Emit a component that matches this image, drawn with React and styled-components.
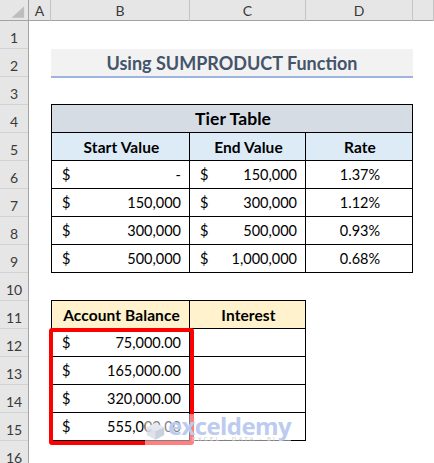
import styled, { createGlobalStyle } from 'styled-components';

const GlobalStyle = createGlobalStyle`
  html, body {
    margin: 0;
    padding: 0;
    background: #ffffff;
    overflow: hidden;
  }
  * {
    box-sizing: border-box;
  }
`;

const COLS = '29px 22px 139px 116px 107px 1fr';

const Sheet = styled.div`
  position: relative;
  width: 434px;
  height: 463px;
  overflow: hidden;
  font-family: Lato, "Liberation Sans", sans-serif;
  background: #ffffff;
`;

const ColHeaderBar = styled.div`
  display: grid;
  grid-template-columns: ${COLS};
  height: 21px;
  background: #e6e6e6;
  border-bottom: 1px solid #a3a3a3;
`;

const ColHeader = styled.div`
  display: flex;
  align-items: center;
  justify-content: center;
  border-right: 1px solid ${(p) => (p.$corner ? '#a3a3a3' : '#c4c4c4')};
  color: #3a3a3a;
  font-size: 14px;
`;

const Body = styled.div`
  display: flex;
`;

const RowHeaders = styled.div`
  display: flex;
  flex-direction: column;
  width: 29px;
  background: #e6e6e6;
  border-right: 1px solid #a3a3a3;
`;

const RowNum = styled.div`
  height: 28px;
  flex: none;
  display: flex;
  align-items: center;
  justify-content: center;
  padding-top: 5px;
  border-bottom: 1px solid #d2d2d2;
  color: #3a3a3a;
  font-size: 14px;
`;

const Content = styled.div`
  flex: 1;
  display: grid;
  grid-template-columns: 22px 139px 116px 107px 1fr;
  grid-template-rows: repeat(16, 28px);
`;

const Title = styled.div`
  grid-column: 2 / 5;
  grid-row: 2;
  display: flex;
  align-items: center;
  justify-content: center;
  height: 29px;
  background: #f2f2f2;
  border-bottom: 2px solid #9db4df;
  color: #44546a;
  font-size: 18px;
  font-weight: 700;
`;

const Table = styled.div`
  position: relative;
  grid-column: ${(p) => p.$cols};
  grid-row: ${(p) => p.$rows};
  align-self: start;
  display: grid;
  grid-template-columns: ${(p) => p.$template};
  grid-auto-rows: 28px;
  border-top: 1px solid #000;
  border-left: 1px solid #000;
  margin-top: -1px;
`;

const Cell = styled.div`
  grid-column: ${(p) => p.$span || 'auto'};
  display: flex;
  align-items: center;
  justify-content: center;
  padding: 0 8px 0 10px;
  border-right: 1px solid #000;
  border-bottom: 1px solid #000;
  background: ${(p) => p.$bg || '#ffffff'};
  color: #000;
  font-size: ${(p) => p.$size || 14.5}px;
  font-weight: ${(p) => (p.$bold ? 700 : 400)};
`;

const HeadCell = styled(Cell)`
  font-size: ${(p) => p.$size || 15.5}px;
  font-weight: 700;
  letter-spacing: 0.1px;
`;

const Money = styled(Cell)`
  justify-content: space-between;
`;

const Highlight = styled.div`
  position: absolute;
  left: -3px;
  top: 27px;
  width: 145px;
  height: 117px;
  border: 4px solid #fe0000;
  border-radius: 3px;
  pointer-events: none;
`;

const Watermark = styled.div`
  position: absolute;
  left: 145px;
  top: 414px;
  width: 146px;
  height: 33px;
  display: flex;
  align-items: center;
  gap: 2px;
  background: rgba(255, 255, 255, 0.5);
`;

const Brand = styled.div`
  display: flex;
  flex-direction: column;
  align-items: center;
  line-height: 1;
`;

const BrandName = styled.div`
  color: #bccbee;
  font-family: "Open Sans", Lato, sans-serif;
  font-size: 24px;
  font-weight: 700;
  letter-spacing: -0.6px;
  margin-top: -6px;
`;

const BrandTag = styled.div`
  color: #cfcfcf;
  font-size: 6px;
  letter-spacing: 2.2px;
  margin-top: -2px;
  padding-left: 10px;
`;

const tiers = [
  ['-', '150,000', '1.37%'],
  ['150,000', '300,000', '1.12%'],
  ['300,000', '500,000', '0.93%'],
  ['500,000', '1,000,000', '0.68%'],
];

const balances = ['75,000.00', '165,000.00', '320,000.00', '555,000.00'];

const App = () => {
  return (
    <Sheet>
      <GlobalStyle />
      <ColHeaderBar>
        <ColHeader $corner>
          <svg width="29" height="21" viewBox="0 0 29 21">
            <polygon points="25,6 25,18 12,18" fill="#bdbdbd" />
          </svg>
        </ColHeader>
        <ColHeader>A</ColHeader>
        <ColHeader>B</ColHeader>
        <ColHeader>C</ColHeader>
        <ColHeader>D</ColHeader>
        <ColHeader />
      </ColHeaderBar>
      <Body>
        <RowHeaders>
          {Array.from({ length: 16 }, (_, i) => (
            <RowNum key={i}>{i + 1}</RowNum>
          ))}
        </RowHeaders>
        <Content>
          <Title>Using SUMPRODUCT Function</Title>

          <Table $cols="2 / 5" $rows="4 / 10" $template="138px 116px 107px">
            <HeadCell $span="1 / -1" $bg="#d6dce4" $size={17.5}>Tier Table</HeadCell>
            <HeadCell $bg="#ddebf7">Start Value</HeadCell>
            <HeadCell $bg="#ddebf7">End Value</HeadCell>
            <HeadCell $bg="#ddebf7">Rate</HeadCell>
            {tiers.map(([start, end, rate]) => [
              <Money key={start + 'a'}><span>$</span><span>{start}</span></Money>,
              <Money key={start + 'b'}><span>$</span><span>{end}</span></Money>,
              <Cell key={start + 'c'}>{rate}</Cell>,
            ])}
          </Table>

          <Table $cols="2 / 4" $rows="11 / 16" $template="138px 116px">
            <HeadCell $bg="#fff2cc">Account Balance</HeadCell>
            <HeadCell $bg="#fff2cc">Interest</HeadCell>
            {balances.map((b) => [
              <Money key={b + 'a'}><span>$</span><span>{b}</span></Money>,
              <Cell key={b + 'b'} />,
            ])}
            <Highlight />
          </Table>
        </Content>
      </Body>
      <Watermark>
        <svg width="36" height="32" viewBox="0 0 36 32">
          <polygon points="18,2 33,10 33,23 18,31 3,23 3,10" fill="#d5dbe6" opacity="0.8" />
          <polygon points="18,2 33,10 18,17 3,10" fill="#e4e8ef" />
          <polygon points="18,17 33,10 33,23 18,31" fill="#c9d1df" />
        </svg>
        <Brand>
          <BrandName>exceldemy</BrandName>
          <BrandTag>EXCEL · DATA · BI</BrandTag>
        </Brand>
      </Watermark>
    </Sheet>
  );
};

export default App;
